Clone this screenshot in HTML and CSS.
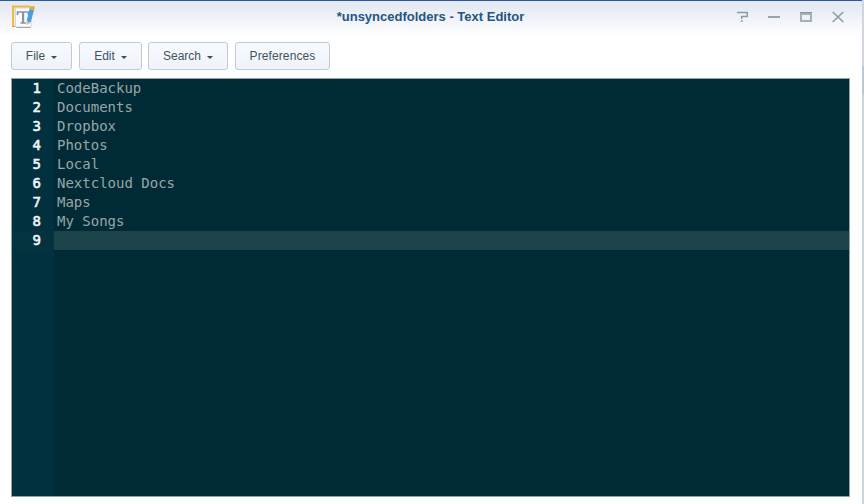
FILE: index.html
```html
<!DOCTYPE html>
<html lang="en">
<head>
<meta charset="utf-8">
<title>Text Editor</title>
<link rel="stylesheet" href="styles.css">
</head>
<body>
<div class="desktop">
<main class="window">
  <header class="titlebar">
    <svg class="app-icon" width="24" height="24" viewBox="0 0 24 24">
      <path d="M1 21V1.5H18" fill="none" stroke="#f0b83c" stroke-width="2.2"/>
      <path d="M0 21.5H4" stroke="#d9a64b"/>
      <path d="M3.5 3H19V22H3.5Z" fill="#fafbfd" stroke="#c9cfd7" stroke-width=".8"/>
      <path d="M4.5 22.5H18.5" stroke="#9da5ae"/>
      <path d="M5.5 10V7H16.5V10M11 7V18M8.5 18H14" fill="none" stroke="#8595a5" stroke-width="1.7"/>
      <path d="M10 7H12.2V18H10Z" fill="#8595a5"/>
      <path d="M17.5 4L22 5L18.7 17.5L14.6 16.3Z" fill="#45a0df"/>
      <path d="M18.2 1.2H22.6V3.5L22 5L17.5 4Z" fill="#e6a936"/>
      <path d="M14.6 16.3L18.7 17.5L14.8 20Z" fill="#d8b681"/>
    </svg>
    <h1 class="title">*unsyncedfolders - Text Editor</h1>
    <div class="controls">
      <svg width="12" height="12" viewBox="0 0 12 12"><path d="M1 1.5H11.5M11.2 1V5.8M12 5.5H5.2M5.7 5V8M4.8 10H6.8" fill="none" stroke="#8b9ca3" stroke-width="1.5"/></svg>
      <svg width="12" height="12" viewBox="0 0 12 12"><path d="M0 6H12" stroke="#8b9ca3" stroke-width="1.8"/></svg>
      <svg width="12" height="12" viewBox="0 0 12 12"><path d="M0 1H12V11H0Z" fill="#a5b1b8"/><path d="M0 1.5H12" stroke="#83969d"/><path d="M2 4H10V9H2Z" fill="#eff3f7"/></svg>
      <svg width="12" height="12" viewBox="0 0 12 12"><path d="M.7 1L11.3 11M11.3 1L.7 11" stroke="#8b9ca3" stroke-width="1.6"/></svg>
    </div>
  </header>
  <nav class="toolbar">
    <button class="button file">File<i class="caret"></i></button>
    <button class="button edit">Edit<i class="caret"></i></button>
    <button class="button search">Search<i class="caret"></i></button>
    <button class="button preferences">Preferences</button>
  </nav>
  <section class="editor">
    <div class="gutter"><div>1</div><div>2</div><div>3</div><div>4</div><div>5</div><div>6</div><div>7</div><div>8</div><div class="active-number">9</div></div>
    <div class="code"><div>CodeBackup</div><div>Documents</div><div>Dropbox</div><div>Photos</div><div>Local</div><div>Nextcloud Docs</div><div>Maps</div><div>My Songs</div><div class="active"></div></div>
  </section>
</main>
<aside class="edge"></aside>
</div>
</body>
</html>
```
FILE: styles.css
```css
* { box-sizing: border-box; }
body { margin: 0; background: #fff; font-family: "Liberation Sans", Arial, sans-serif; }
.desktop { display: flex; width: 864px; height: 504px; overflow: hidden; }
.window {
  width: 862px;
  height: 504px;
  border-top: 1px solid #2a5b98;
  background: linear-gradient(#e3e8f1 0, #e9edf5 10px, #fff 34px);
}
.edge {
  width: 2px;
  background: linear-gradient(#d0d6df 0 66px, #bdc9d1 66px 95px, #cdd5dd 95px);
}
.titlebar {
  display: grid;
  grid-template-columns: 110px 1fr 110px;
  align-items: center;
  height: 31px;
  padding: 0 18px 0 12px;
}
.app-icon { margin-top: 1px; }
.title {
  margin: 0;
  padding-left: 5px;
  color: #245583;
  font-size: 13px;
  line-height: 30px;
  text-align: center;
  white-space: nowrap;
}
.controls { display: flex; justify-content: flex-end; gap: 20px; }
.toolbar { display: flex; height: 46px; padding: 10px 0 0 11px; }
.button {
  display: flex;
  align-items: center;
  justify-content: center;
  height: 28px;
  margin: 0;
  padding: 0;
  border: 1px solid #bfcad5;
  border-radius: 3px;
  background: linear-gradient(#f7fafd, #eff3f9);
  color: #3e545d;
  font: 12px/26px "Liberation Sans", Arial, sans-serif;
}
.file { width: 61px; margin-right: 7px; }
.edit { width: 63px; margin-right: 6px; }
.search { width: 80px; margin-right: 7px; }
.preferences { width: 95px; letter-spacing: .1px; }
.caret {
  margin: 3px 0 0 6px;
  border-top: 3px solid #344f59;
  border-right: 3px solid transparent;
  border-left: 3px solid transparent;
}
.editor {
  display: flex;
  width: 839px;
  height: 419px;
  margin-left: 11px;
  border: 1px solid #8da3a9;
  background: #002b36;
  color: #98a6a7;
  font: 14px/19px "DejaVu Sans Mono", monospace;
}
.gutter {
  width: 42px;
  background: #01313f;
  color: #f1f5f8;
  text-align: right;
  -webkit-text-stroke: .6px #f1f5f8;
}
.gutter div { height: 19px; padding-right: 13px; }
.gutter .active-number { background: #04333f; }
.code { flex: 1; }
.code div { height: 19px; padding-left: 3px; }
.code .active { background: #1c424a; }
```
